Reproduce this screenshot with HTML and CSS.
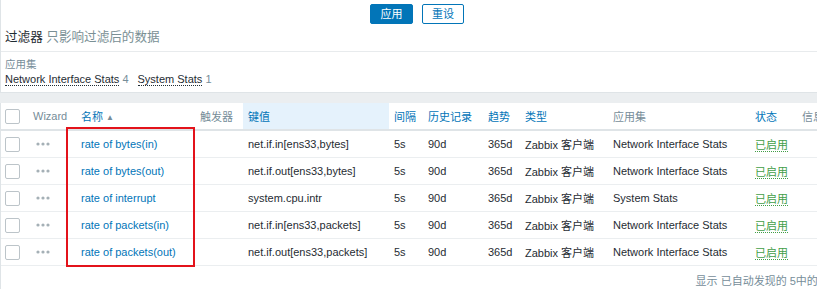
FILE: index.html
```html
<!DOCTYPE html>
<html>
<head>
    <meta charset="UTF-8">
    <title>监控项</title>
    <link rel="stylesheet" href="styles.css">
</head>
<body>
<div class="page">
    <div class="filter">
        <div class="filter-buttons">
            <button class="btn">应用</button>
            <button class="btn btn-alt">重设</button>
        </div>
        <div class="filter-title">过滤器 <span class="muted">只影响过滤后的数据</span></div>
        <div class="subfilter">
            <div class="subfilter-label">应用集</div>
            <div class="subfilter-tags">
                <span class="tag"><a class="dotted">Network Interface Stats</a> <span class="count">4</span></span>
                <span class="tag"><a class="dotted">System Stats</a> <span class="count">1</span></span>
            </div>
        </div>
    </div>

    <div class="list">
        <table>
            <colgroup>
                <col style="width:27px"><col style="width:48px"><col style="width:119px"><col style="width:48px">
                <col style="width:146px"><col style="width:34px"><col style="width:60px"><col style="width:37px">
                <col style="width:88px"><col style="width:142px"><col style="width:47px"><col>
            </colgroup>
            <thead>
                <tr>
                    <th><span class="checkbox"></span></th>
                    <th class="gray">Wizard</th>
                    <th><a>名称</a> <span class="arrow">▲</span></th>
                    <th class="gray">触发器</th>
                    <th class="sorted"><a>键值</a></th>
                    <th><a>间隔</a></th>
                    <th><a>历史记录</a></th>
                    <th><a>趋势</a></th>
                    <th><a>类型</a></th>
                    <th class="gray">应用集</th>
                    <th><a>状态</a></th>
                    <th class="gray">信息</th>
                </tr>
            </thead>
            <tbody>
                <tr>
                    <td><span class="checkbox"></span></td>
                    <td><svg class="dots" width="14" height="4" viewBox="0 0 14 4"><circle cx="2" cy="2" r="1.6"/><circle cx="7" cy="2" r="1.6"/><circle cx="12" cy="2" r="1.6"/></svg></td>
                    <td><a>rate of bytes(in)</a></td>
                    <td></td>
                    <td>net.if.in[ens33,bytes]</td>
                    <td>5s</td><td>90d</td><td>365d</td><td>Zabbix 客户端</td>
                    <td>Network Interface Stats</td>
                    <td><a class="enabled">已启用</a></td><td></td>
                </tr>
                <tr>
                    <td><span class="checkbox"></span></td>
                    <td><svg class="dots" width="14" height="4" viewBox="0 0 14 4"><circle cx="2" cy="2" r="1.6"/><circle cx="7" cy="2" r="1.6"/><circle cx="12" cy="2" r="1.6"/></svg></td>
                    <td><a>rate of bytes(out)</a></td>
                    <td></td>
                    <td>net.if.out[ens33,bytes]</td>
                    <td>5s</td><td>90d</td><td>365d</td><td>Zabbix 客户端</td>
                    <td>Network Interface Stats</td>
                    <td><a class="enabled">已启用</a></td><td></td>
                </tr>
                <tr>
                    <td><span class="checkbox"></span></td>
                    <td><svg class="dots" width="14" height="4" viewBox="0 0 14 4"><circle cx="2" cy="2" r="1.6"/><circle cx="7" cy="2" r="1.6"/><circle cx="12" cy="2" r="1.6"/></svg></td>
                    <td><a>rate of interrupt</a></td>
                    <td></td>
                    <td>system.cpu.intr</td>
                    <td>5s</td><td>90d</td><td>365d</td><td>Zabbix 客户端</td>
                    <td>System Stats</td>
                    <td><a class="enabled">已启用</a></td><td></td>
                </tr>
                <tr>
                    <td><span class="checkbox"></span></td>
                    <td><svg class="dots" width="14" height="4" viewBox="0 0 14 4"><circle cx="2" cy="2" r="1.6"/><circle cx="7" cy="2" r="1.6"/><circle cx="12" cy="2" r="1.6"/></svg></td>
                    <td><a>rate of packets(in)</a></td>
                    <td></td>
                    <td>net.if.in[ens33,packets]</td>
                    <td>5s</td><td>90d</td><td>365d</td><td>Zabbix 客户端</td>
                    <td>Network Interface Stats</td>
                    <td><a class="enabled">已启用</a></td><td></td>
                </tr>
                <tr>
                    <td><span class="checkbox"></span></td>
                    <td><svg class="dots" width="14" height="4" viewBox="0 0 14 4"><circle cx="2" cy="2" r="1.6"/><circle cx="7" cy="2" r="1.6"/><circle cx="12" cy="2" r="1.6"/></svg></td>
                    <td><a>rate of packets(out)</a></td>
                    <td></td>
                    <td>net.if.out[ens33,packets]</td>
                    <td>5s</td><td>90d</td><td>365d</td><td>Zabbix 客户端</td>
                    <td>Network Interface Stats</td>
                    <td><a class="enabled">已启用</a></td><td></td>
                </tr>
            </tbody>
        </table>
        <div class="paging">显示 已自动发现的 5中的 5</div>
        <div class="highlight-box"></div>
    </div>
</div>
</body>
</html>
```

FILE: styles.css
```css
html, body {
    margin: 0;
    padding: 0;
    overflow: hidden;
    background: #ebeef0;
    font-family: "Liberation Sans", Arial, "Noto Sans CJK SC", sans-serif;
    font-size: 11px;
    color: #1f2c33;
}
a {
    color: #0275b8;
    text-decoration: none;
}
.page {
    width: 832px;
}
.filter {
    background: #fff;
    border-left: 1px solid #dfe4e7;
    border-bottom: 1px solid #dfe4e7;
    padding-top: 4px;
    margin-bottom: 10px;
}
.filter-buttons {
    display: flex;
    justify-content: center;
    gap: 9px;
    padding-left: 1px;
}
.btn {
    height: 20px;
    width: 43px;
    padding: 0;
    border: 1px solid #0275b8;
    border-radius: 2px;
    background: #0275b8;
    color: #fff;
    font-family: inherit;
    font-size: 11px;
    line-height: 18px;
}
.btn-alt {
    width: 42px;
    background: #fff;
    color: #0275b8;
}
.filter-title {
    margin-top: 5px;
    padding: 0 0 6px 4px;
    line-height: 16px;
    font-size: 12.6px;
    border-bottom: 1px solid #e8ebed;
}
.muted {
    color: #7a9095;
}
.subfilter {
    padding: 5px 0 6px 4px;
}
.subfilter-label {
    color: #768d99;
    font-size: 10.5px;
    line-height: 14px;
}
.subfilter-tags {
    display: flex;
    gap: 9px;
    margin-top: 1px;
    line-height: 14px;
}
.dotted {
    color: #1f2c33;
    border-bottom: 1px dotted #1f2c33;
}
.count {
    color: #768d99;
}
.list {
    position: relative;
    background: #fff;
    border-left: 1px solid #dfe4e7;
    height: 186px;
}
table {
    width: 831px;
    table-layout: fixed;
    border-collapse: collapse;
}
th, td {
    padding: 0 0 0 5px;
    text-align: left;
    white-space: nowrap;
    overflow: hidden;
    font-weight: normal;
}
th:first-child, td:first-child {
    padding-left: 4px;
}
th {
    height: 26px;
    border-bottom: 2px solid #dfe4e7;
    color: #0275b8;
}
th.gray {
    color: #768d99;
}
th.sorted {
    background: #e5f2fc;
}
.arrow {
    color: #768d99;
    font-size: 8px;
    vertical-align: 1px;
}
td {
    height: 26px;
    border-bottom: 1px solid #ebeef0;
}
.checkbox {
    display: block;
    width: 13px;
    height: 13px;
    border: 1px solid #bcc4c9;
    border-radius: 2px;
    background: #fff;
}
.dots {
    display: block;
    margin-left: 3px;
    fill: #a5b0b6;
}
.enabled {
    color: #429e47;
    border-bottom: 1px dotted #429e47;
}
.paging {
    text-align: right;
    padding: 8px 5px 0 0;
    line-height: 14px;
    color: #768d99;
}
.highlight-box {
    position: absolute;
    left: 65px;
    top: 24px;
    width: 129px;
    height: 140px;
    box-sizing: border-box;
    border: 2px solid #e3131b;
}
```
